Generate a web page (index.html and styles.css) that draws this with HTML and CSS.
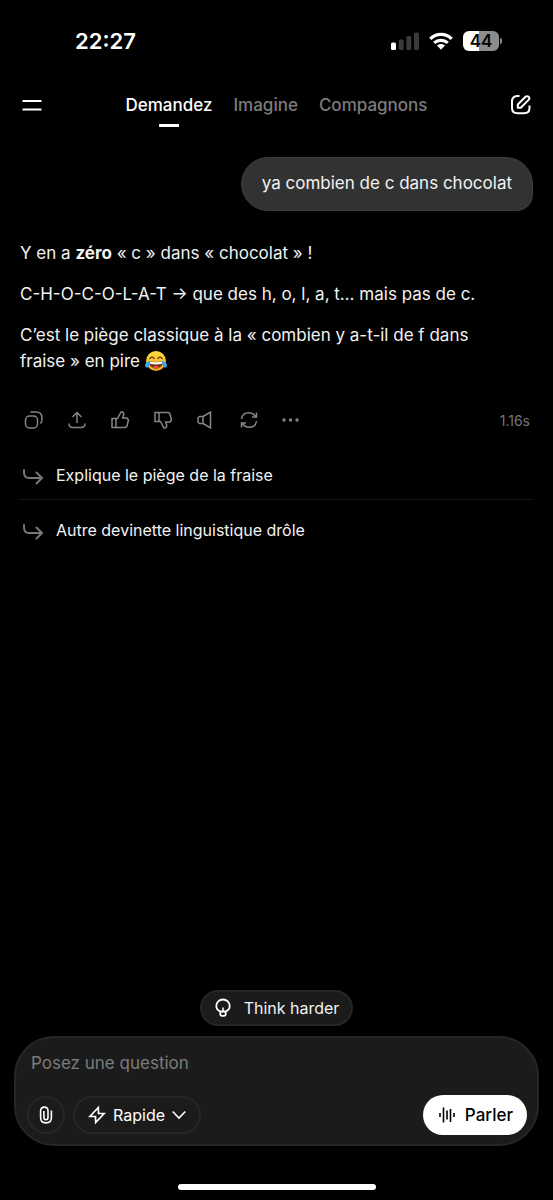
FILE: index.html
```html
<!DOCTYPE html>
<html lang="fr">
<head>
<meta charset="utf-8">
<meta name="viewport" content="width=device-width, initial-scale=1">
<title>Demandez</title>
<link rel="stylesheet" href="styles.css">
</head>
<body>
<div class="status">
  <time class="clock">22:27</time>
  <div class="status-icons">
    <svg width="28" height="18" viewBox="0 0 28 18" aria-hidden="true"><rect x="0" y="10.500" width="5" height="7.500" rx="1.500" fill="#fff"/><g fill="#3a3a3a"><rect x="7.700" y="7.500" width="5" height="10.500" rx="1.500"/><rect x="15.300" y="4" width="5" height="14" rx="1.500"/><rect x="23" y="0.500" width="5" height="17.500" rx="1.500"/></g></svg>
    <svg width="24" height="18" viewBox="0 0 24 18" aria-hidden="true"><g fill="none" stroke="#fff" stroke-width="3.200"><path d="M1.300 6.800C7.300 1 16.700 1 22.700 6.800"/><path d="M5.200 10.900C9 7.400 15 7.400 18.800 10.900"/></g><path d="M8 13.500c2.300-2 5.700-2 8 0l-4 4.300z" fill="#fff"/></svg>
    <div class="battery"><span class="battery-level">44</span></div>
  </div>
</div>
<header class="topbar">
  <button class="icon-button" aria-label="Menu"><svg width="20" height="20" viewBox="0 0 20 20"><path d="M0.500 6h19M0.500 14.500h19" stroke="#fff" stroke-width="2" fill="none"/></svg></button>
  <nav class="tabs">
    <a class="tab tab-active" href="#demandez">Demandez</a>
    <a class="tab" href="#imagine">Imagine</a>
    <a class="tab" href="#compagnons">Compagnons</a>
  </nav>
  <button class="icon-button" aria-label="Nouvelle conversation"><svg width="20" height="20" viewBox="0 0 20 20" fill="none" stroke="#fff" stroke-width="2" stroke-linejoin="round"><path d="M8.500 1H6.500C3 1 1 3 1 6.500V13c0 3.500 2 5.200 5.500 5.200H13c3.500 0 5.500-1.700 5.500-5.200v-2.500"/><path d="M6.800 12.700V9.500l7.700-7.700c.9-.9 2.200-.9 3.100 0s.9 2.200 0 3.100L9.800 12.700z"/></svg></button>
</header>
<main class="chat">
  <p class="bubble">ya combien de c dans chocolat</p>
  <article class="answer">
    <p>Y en a <strong>zéro</strong> «&nbsp;c&nbsp;» dans «&nbsp;chocolat&nbsp;»&nbsp;!</p>
    <p>C-H-O-C-O-L-A-T → que des h, o, l, a, t… mais pas de c.</p>
    <p>C’est le piège classique à la «&nbsp;combien y a-t-il de f dans fraise&nbsp;» en pire <svg class="emoji" width="22" height="22" viewBox="0 0 22 22" role="img" aria-label="rire aux larmes"><defs><linearGradient id="face" x2="0" y2="1"><stop stop-color="#ffdf3d"/><stop offset="1" stop-color="#f4a51f"/></linearGradient></defs><circle cx="11" cy="11" r="10" fill="url(#face)"/><path d="M4.800 8.600Q6.700 5.800 9 8.400M13 8.400Q15.300 5.800 17.200 8.600" fill="none" stroke="#66350f" stroke-width="1.400" stroke-linecap="round"/><path d="M4.200 11.200Q11 12.800 17.800 11.200C17.700 16 14.700 18.500 11 18.500S4.300 16 4.200 11.200z" fill="#70340f"/><path d="M4.700 11.500q6.300 1.500 12.600 0l-.5 2.300q-5.800 1.200-11.600 0z" fill="#fff"/><path d="M7.500 17.200q3.500-2.600 7 0-3.500 2-7 0z" fill="#e9583e"/><path d="M5 10.700C1.800 11.500 0 13.300 0 15.400c0 2.900 3.800 2.800 4.300.2.300-1.500.5-3.300.7-4.900zM17 10.700c3.200.8 5 2.600 5 4.700 0 2.900-3.800 2.800-4.300.2-.3-1.500-.5-3.300-.7-4.900z" fill="#39a9ee"/></svg></p>
  </article>
  <div class="actions">
    <button class="action" aria-label="Copier"><svg viewBox="0 0 20 20"><rect x="1.500" y="6" width="12" height="12" rx="4"/><path d="M6.500 2H12c4 0 6 2 6 6v1.500c0 1.800-.5 3-1.700 4"/></svg></button>
    <button class="action" aria-label="Partager"><svg viewBox="0 0 20 20"><path d="M10 13V2.500M5.500 7 10 2.500 14.500 7M2 13.500c0 2.500 1.300 4 4 4h8c2.700 0 4-1.500 4-4"/></svg></button>
    <button class="action" aria-label="J’aime"><svg viewBox="0 0 20 20"><path d="M2 8.500h4v9H2zM6 8.500h1.500L11 2h1.500c1.200.7 1.500 2 1 3.500L12.700 8H17l1.500 2-1.500 6-1.500 1.500H6z"/></svg></button>
    <button class="action" aria-label="Je n’aime pas"><svg viewBox="0 0 20 20"><path d="M2 2.500h4v9H2zM6 2.500h9.500L17 4l1.500 6-1.500 2h-4.300l.8 2.500c.5 1.500.2 2.800-1 3.500H11l-3.500-6.500H6z"/></svg></button>
    <button class="action" aria-label="Écouter"><svg viewBox="0 0 20 20"><path d="M7 6.500H3.500L2 8v4l1.500 1.500H7zM7 6.500 14.500 2v16L7 13.500z"/></svg></button>
    <button class="action" aria-label="Régénérer"><svg viewBox="0 0 20 20"><path d="M2.500 9C3 5 6 2.700 9.700 2.700c3.300 0 5.400 1.300 7.300 4.300M17.500 2.500V7H13M17.500 11c-.5 4-3.500 6.300-7.200 6.300-3.300 0-5.400-1.300-7.300-4.300M2.500 17.500V13H7"/></svg></button>
    <button class="action" aria-label="Plus"><svg viewBox="0 0 20 20"><g fill="#858585" stroke="none"><circle cx="2" cy="10" r="1.700"/><circle cx="8.500" cy="10" r="1.700"/><circle cx="15" cy="10" r="1.700"/></g></svg></button>
    <span class="duration">1.16s</span>
  </div>
  <div class="suggestions">
    <button class="suggestion"><svg width="22" height="20" viewBox="0 0 22 20"><path d="M2 5v2.500C2 11 3.500 13 7 13h13M14.500 7.500 20 13l-5.500 5.500"/></svg>Explique le piège de la fraise</button>
    <button class="suggestion"><svg width="22" height="20" viewBox="0 0 22 20"><path d="M2 5v2.500C2 11 3.500 13 7 13h13M14.500 7.500 20 13l-5.500 5.500"/></svg>Autre devinette linguistique drôle</button>
  </div>
</main>
<footer class="dock">
  <button class="think"><svg width="18" height="20" viewBox="0 0 18 20" fill="none" stroke="#fff" stroke-width="1.800"><path d="M6.300 13.500C3.700 12.500 2.300 10.300 2.300 8c0-3.800 2.900-6.500 6.700-6.500s6.700 2.700 6.700 6.500c0 2.300-1.400 4.500-4 5.500zM6.300 13.500h5.400V16c0 1.200-.6 1.900-1.800 1.900H8.100c-1.200 0-1.800-.7-1.800-1.900z"/><path d="M9 9.500v4" stroke-width="1.500"/></svg>Think harder</button>
  <form class="composer">
    <input class="prompt" type="text" placeholder="Posez une question" aria-label="Posez une question">
    <div class="tools">
      <button class="attach" type="button" aria-label="Joindre un fichier"><svg width="14" height="18" viewBox="0 0 14 18" fill="none" stroke="#fff" stroke-width="1.600"><path d="M4.900 5v6.500c0 1.400.8 2.200 2 2.200s2.100-.8 2.100-2.200V5c0-2.500-1.200-3.900-3.400-3.900S1.600 2.500 1.600 5v6.500c0 3.400 2 5.400 5.300 5.400s5.500-2 5.500-5.400V4.500"/></svg></button>
      <label class="mode"><svg width="18" height="20" viewBox="0 0 18 20" fill="none" stroke="#fff" stroke-width="1.700"><path d="M10.300 2.500 1.800 11.500H7.500L7.700 17.500l8.500-9h-5.700z"/></svg><select class="mode-select" aria-label="Mode"><option>Rapide</option></select><svg width="14" height="10" viewBox="0 0 14 10" fill="none" stroke="#fff" stroke-width="1.600"><path d="m0.700 1.500 6.300 6.500 6.300-6.500"/></svg></label>
      <button class="talk" type="button"><svg width="16" height="16" viewBox="0 0 16 16" stroke="#000" stroke-width="1.600"><path d="M1 6v4M4.500 0.500v15M8 3.500v9M11.500 2v13M15 6v4"/></svg>Parler</button>
    </div>
  </form>
  <div class="home-bar"></div>
</footer>
</body>
</html>
```
FILE: styles.css
```css
* { box-sizing: border-box; }

body {
  margin: 0;
  min-height: 100vh;
  display: flex;
  flex-direction: column;
  background: #000;
  color: #f2f2f2;
  font-family: Inter, "Noto Sans", sans-serif;
  font-size: 16px;
}

p { margin: 0; }

button, input, select {
  margin: 0;
  padding: 0;
  border: 0;
  background: none;
  color: inherit;
  font: inherit;
}

svg { flex: none; }

.status {
  display: flex;
  align-items: center;
  justify-content: space-between;
  height: 82px;
  padding: 0 51px 0 75px;
}

.clock {
  color: #fff;
  font-size: 22px;
  font-weight: 600;
}

.status-icons {
  display: flex;
  align-items: center;
  gap: 10px;
}

.battery {
  position: relative;
  width: 36px;
  height: 20px;
  margin-right: 3px;
  border-radius: 6px;
  background: linear-gradient(90deg, #fff 44%, #8c8c8c 44%);
  color: #000;
  text-align: center;
}

.battery::after {
  content: "";
  position: absolute;
  left: 37px;
  top: 7px;
  width: 2px;
  height: 6px;
  border-radius: 0 2px 2px 0;
  background: #8c8c8c;
}

.battery-level {
  display: block;
  font-size: 17px;
  font-weight: 600;
  line-height: 20px;
}

.topbar {
  display: flex;
  align-items: center;
  justify-content: space-between;
  height: 46px;
  padding: 0 22px;
}

.icon-button {
  display: flex;
}

.tabs {
  display: flex;
  gap: 21px;
}

.tab {
  position: relative;
  color: #7c7c7c;
  font-size: 17px;
  font-weight: 500;
  line-height: 46px;
  text-decoration: none;
}

.tab-active { color: #fff; }

.tab-active::after {
  content: "";
  position: absolute;
  left: 50%;
  bottom: 1px;
  width: 20px;
  height: 3px;
  margin-left: -10px;
  background: #fff;
}

.chat {
  flex: 1;
  display: flex;
  flex-direction: column;
  padding: 29px 20px 0;
}

.bubble {
  align-self: flex-end;
  padding: 12px 20px 14px;
  border: 1px solid #3c3c3c;
  border-radius: 27px 27px 16px 27px;
  background: #323232;
  font-size: 17px;
  line-height: 26px;
}

.answer {
  display: flex;
  flex-direction: column;
  gap: 15px;
  margin-top: 29px;
  font-size: 17px;
  line-height: 26px;
}

.emoji { vertical-align: -5px; }

.actions {
  display: flex;
  align-items: center;
  gap: 23px;
  margin-top: 36px;
  padding: 0 3px 0 4px;
}

.action {
  display: flex;
  width: 20px;
  height: 20px;
}

.action svg {
  width: 20px;
  height: 20px;
  fill: none;
  stroke: #858585;
  stroke-width: 1.5;
}

.duration {
  margin-left: auto;
  color: #757575;
  font-size: 14px;
}

.suggestions {
  display: flex;
  flex-direction: column;
  margin-top: 20px;
}

.suggestion {
  display: flex;
  align-items: center;
  gap: 12px;
  height: 49px;
  padding-left: 2px;
  text-align: left;
}

.suggestion + .suggestion {
  height: 60px;
  border-top: 1px solid #171717;
}

.suggestion svg {
  fill: none;
  stroke: #787878;
  stroke-width: 2;
  stroke-linecap: round;
}

.dock {
  display: flex;
  flex-direction: column;
  align-items: center;
  padding: 0 14px 10px;
}

.think {
  display: flex;
  align-items: center;
  gap: 12px;
  height: 36px;
  padding: 0 12px;
  border: 2px solid #262626;
  border-radius: 18px;
  background: #1b1b1b;
}

.composer {
  align-self: stretch;
  margin-top: 10px;
  padding: 9px 10px 9px 11px;
  border: 2px solid #262626;
  border-radius: 40px;
  background: #1b1b1b;
}

.prompt {
  display: block;
  width: 100%;
  height: 32px;
  padding: 0 4px;
  outline: 0;
  font-size: 17px;
}

.prompt::placeholder {
  color: #7c7c7c;
  opacity: 1;
}

.tools {
  display: flex;
  align-items: center;
  gap: 8px;
  margin-top: 16px;
}

.attach, .mode {
  display: flex;
  align-items: center;
  justify-content: center;
  height: 38px;
  border: 2px solid #262626;
  border-radius: 19px;
}

.attach { width: 38px; }

.mode {
  gap: 7px;
  padding: 0 13px;
  color: #fff;
}

.mode-select {
  appearance: none;
  outline: 0;
}

.talk {
  display: flex;
  align-items: center;
  gap: 10px;
  height: 40px;
  margin-left: auto;
  padding: 0 14px 0 16px;
  border-radius: 20px;
  background: #fff;
  color: #000;
  font-size: 17px;
  font-weight: 500;
}

.home-bar {
  width: 198px;
  height: 6px;
  margin-top: 38px;
  border-radius: 3px;
  background: #fff;
}
```
